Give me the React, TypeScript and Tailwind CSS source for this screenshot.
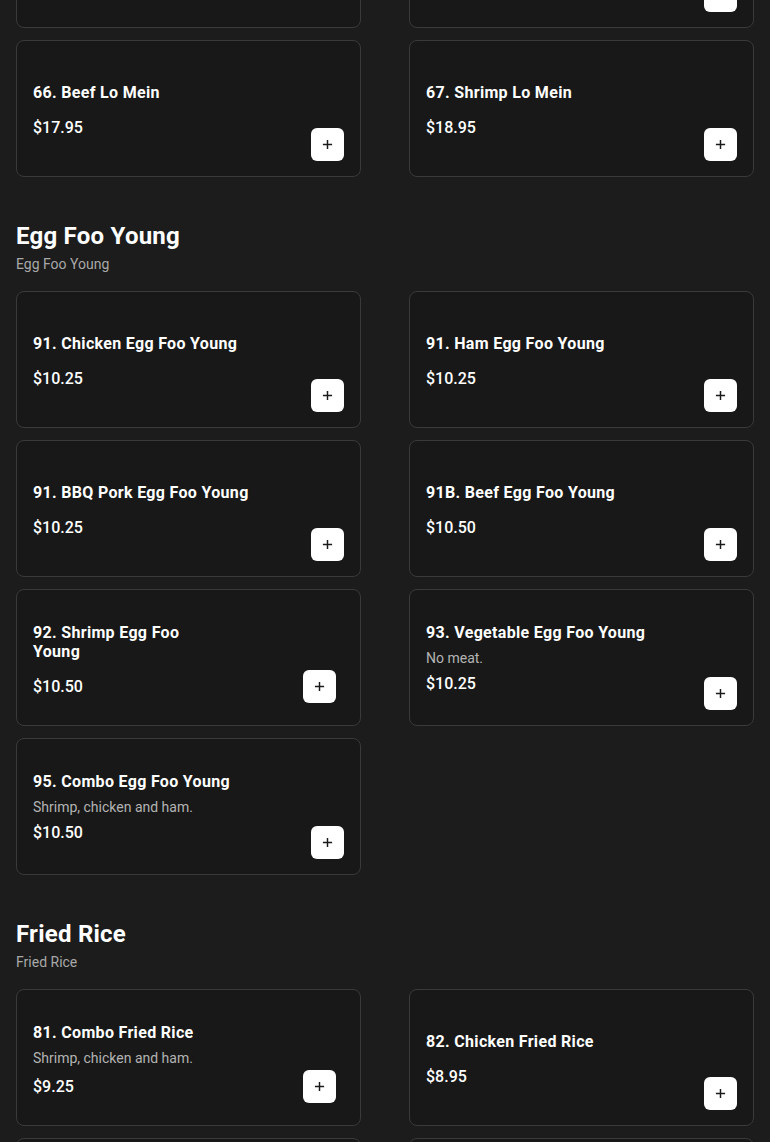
type Item = {
  name: string;
  price: string;
  desc?: string;
  inline?: boolean;
};

type Section = {
  title?: string;
  subtitle?: string;
  items: Item[];
};

const sections: Section[] = [
  {
    items: [
      { name: "64. Chicken Lo Mein", price: "$16.95", inline: true },
      { name: "65. Pork Lo Mein", price: "$16.95" },
      { name: "66. Beef Lo Mein", price: "$17.95" },
      { name: "67. Shrimp Lo Mein", price: "$18.95" },
    ],
  },
  {
    title: "Egg Foo Young",
    subtitle: "Egg Foo Young",
    items: [
      { name: "91. Chicken Egg Foo Young", price: "$10.25" },
      { name: "91. Ham Egg Foo Young", price: "$10.25" },
      { name: "91. BBQ Pork Egg Foo Young", price: "$10.25" },
      { name: "91B. Beef Egg Foo Young", price: "$10.50" },
      { name: "92. Shrimp Egg Foo Young", price: "$10.50", inline: true },
      { name: "93. Vegetable Egg Foo Young", price: "$10.25", desc: "No meat." },
      { name: "95. Combo Egg Foo Young", price: "$10.50", desc: "Shrimp, chicken and ham." },
    ],
  },
  {
    title: "Fried Rice",
    subtitle: "Fried Rice",
    items: [
      { name: "81. Combo Fried Rice", price: "$9.25", desc: "Shrimp, chicken and ham.", inline: true },
      { name: "82. Chicken Fried Rice", price: "$8.95" },
      { name: "83. Pork Fried Rice", price: "$8.95" },
      { name: "84. Beef Fried Rice", price: "$9.25" },
    ],
  },
];

function PlusButton() {
  return (
    <button className="flex h-[33px] w-[33px] shrink-0 items-center justify-center rounded-md bg-white text-[#1a1a1a]">
      <svg width="11" height="11" viewBox="0 0 12 12" fill="none">
        <path d="M6 1v10M1 6h10" stroke="currentColor" strokeWidth="1.6" />
      </svg>
    </button>
  );
}

function ItemCard({ item }: { item: Item }) {
  if (item.inline) {
    return (
      <div className="flex h-[137px] flex-col rounded-lg border border-[#3a3a3a] bg-[#181818] pl-4 pr-6 pt-[33px]">
        <h3 className="max-w-[170px] text-base font-bold leading-[19px] tracking-[0.02em] text-white">{item.name}</h3>
        {item.desc && <p className="mt-[6px] text-sm leading-5 text-[#b3b3b3]">{item.desc}</p>}
        <div className={"flex items-center justify-between " + (item.desc ? "mt-[2px]" : "mt-[9px]")}>
          <span className="text-base font-medium leading-6">{item.price}</span>
          <PlusButton />
        </div>
      </div>
    );
  }

  return (
    <div className="flex h-[137px] rounded-lg border border-[#3a3a3a] bg-[#181818]">
      <div className={"flex flex-1 flex-col pl-4 " + (item.desc ? "pt-[33px]" : "pt-[42px]")}>
        <h3 className="text-base font-bold leading-[19px] tracking-[0.02em] text-white">{item.name}</h3>
        {item.desc && <p className="mt-[6px] text-sm leading-5 text-[#b3b3b3]">{item.desc}</p>}
        <span className={"text-base font-medium leading-6 " + (item.desc ? "mt-1" : "mt-[14px]")}>{item.price}</span>
      </div>
      <div className="flex flex-col justify-end pb-[15px] pr-4">
        <PlusButton />
      </div>
    </div>
  );
}

export default function App() {
  return (
    <div className="min-h-screen overflow-hidden bg-[#1c1c1c] px-4 pb-10 font-['Roboto',sans-serif] text-white">
      {sections.map((section, i) => (
        <section key={i} className={i === 0 ? "mt-[-109px]" : "mt-[43px]"}>
          {section.title && (
            <>
              <h2 className="text-2xl font-bold leading-8 tracking-[0.01em]">{section.title}</h2>
              <p className="mt-0.5 text-sm leading-5 text-[#a8a8a8]">{section.subtitle}</p>
            </>
          )}
          <div className={"grid grid-cols-2 gap-x-12 gap-y-3 " + (section.title ? "mt-[17px]" : "")}>
            {section.items.map((item) => (
              <ItemCard key={item.name} item={item} />
            ))}
          </div>
        </section>
      ))}
    </div>
  );
}
